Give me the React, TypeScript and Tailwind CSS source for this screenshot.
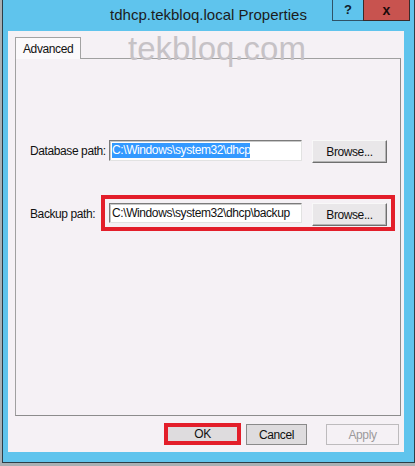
const font = { fontFamily: '"Liberation Sans", Arial, sans-serif' };

function Browse() {
  return (
    <button className="w-[75px] h-[23px] bg-[#e9e7e9] border border-t-[#f8f8f8] border-l-[#f8f8f8] border-r-[#6f6f6f] border-b-[#6f6f6f] shadow-[inset_-1px_-1px_0_#b4b4b4] text-[12px] tracking-[-0.4px] text-[#111] flex items-center justify-center">
      Browse...
    </button>
  );
}

function PathInput({ children }: { children: React.ReactNode }) {
  return (
    <div className="w-[193px] bg-white border border-t-[#7b7b7b] border-l-[#7b7b7b] border-r-[#e2e2e2] border-b-[#e2e2e2] shadow-[inset_1px_1px_0_#c8c8c8] flex items-center pl-[2px] text-[12px] tracking-[-0.4px] text-[#111] whitespace-nowrap overflow-hidden">
      {children}
    </div>
  );
}

export default function App() {
  return (
    <div className="w-[415px] h-[466px] bg-[#a9b0b4] pl-[2px] pb-[3px] overflow-hidden" style={font}>
      <div className="w-[413px] h-full bg-[#5fc4ed] border-l border-r border-b border-[#2d3e48] flex flex-col">
        {/* title bar */}
        <div className="relative h-[31px] shrink-0">
          <div className="absolute inset-x-0 top-[5px] text-center text-[15px] text-[#1c1c1c] leading-[20px]">
            tdhcp.tekbloq.local Properties
          </div>
          <div className="absolute top-0 left-[329px] w-[32px] h-[21px] border border-t-0 border-[#2f5368] bg-[#5fc4ed] flex items-center justify-center text-[13px] font-bold text-[#10202a]">
            ?
          </div>
          <div className="absolute top-0 left-[360px] w-[47px] h-[21px] border border-t-0 border-[#3a2a2a] bg-[#c8534f] flex items-center justify-center text-[14px] font-bold text-[#1a0a0a]">
            x
          </div>
        </div>

        {/* client area */}
        <div className="relative ml-[5px] w-[396px] h-[421px] bg-[#f5f1f5] pl-[7px] pt-[6px]">
          <div className="absolute left-[120px] top-[-2px] text-[33px] text-[#c6c2c6] leading-[40px] pointer-events-none">
            tekbloq.com
          </div>

          {/* tab */}
          <div className="relative z-10 w-[66px] h-[22px] -mb-px bg-[#fbf9fb] border border-b-0 border-[#a3a3a3] pl-[7px] pt-[2px] text-[12px] tracking-[-0.4px] text-[#111]">
            Advanced
          </div>

          {/* panel */}
          <div className="w-[386px] h-[358px] border border-[#a0a0a0] border-r-[#8c8c8c] border-b-[#8c8c8c] bg-[#f5f1f5] pt-[81px]">
            <div className="flex items-start">
              <div className="w-[93px] pl-[14px] h-[21px] flex items-center text-[12px] tracking-[-0.4px] text-[#111]">
                Database path:
              </div>
              <div className="h-[21px] flex">
                <PathInput>
                  <span className="bg-[#3399ff] text-white leading-[15px]">C:\Windows\system32\dhcp</span>
                </PathInput>
              </div>
              <div className="ml-[10px]">
                <Browse />
              </div>
            </div>

            <div className="flex items-center mt-[32px]">
              <div className="w-[85px] pl-[14px] pt-[2px] text-[12px] tracking-[-0.4px] text-[#111]">
                Backup path:
              </div>
              <div className="w-[294px] h-[36px] border-4 border-[#e31e2a] pl-[4px] pt-[4px] flex items-start">
                <div className="h-[20px] flex">
                  <PathInput>C:\Windows\system32\dhcp\backup</PathInput>
                </div>
                <div className="ml-[10px]">
                  <Browse />
                </div>
              </div>
            </div>
          </div>

          {/* buttons */}
          <div className="flex items-start mt-[7px] ml-[149px]">
            <div className="w-[77px] h-[22px] border-4 border-[#e31e2a] bg-[#dedcde] flex items-center justify-center text-[12px] tracking-[-0.4px] text-[#111]">
              OK
            </div>
            <button className="ml-[5px] mt-px w-[61px] h-[21px] bg-[#dedcde] border border-[#8a8a8a] flex items-center justify-center text-[12px] tracking-[-0.4px] text-[#111]">
              Cancel
            </button>
            <button className="ml-[19px] mt-px w-[73px] h-[21px] bg-[#f5f1f5] border border-[#bdbbbd] flex items-center justify-center text-[12px] tracking-[-0.4px] text-[#9c9a9c]">
              Apply
            </button>
          </div>
        </div>
      </div>
    </div>
  );
}
